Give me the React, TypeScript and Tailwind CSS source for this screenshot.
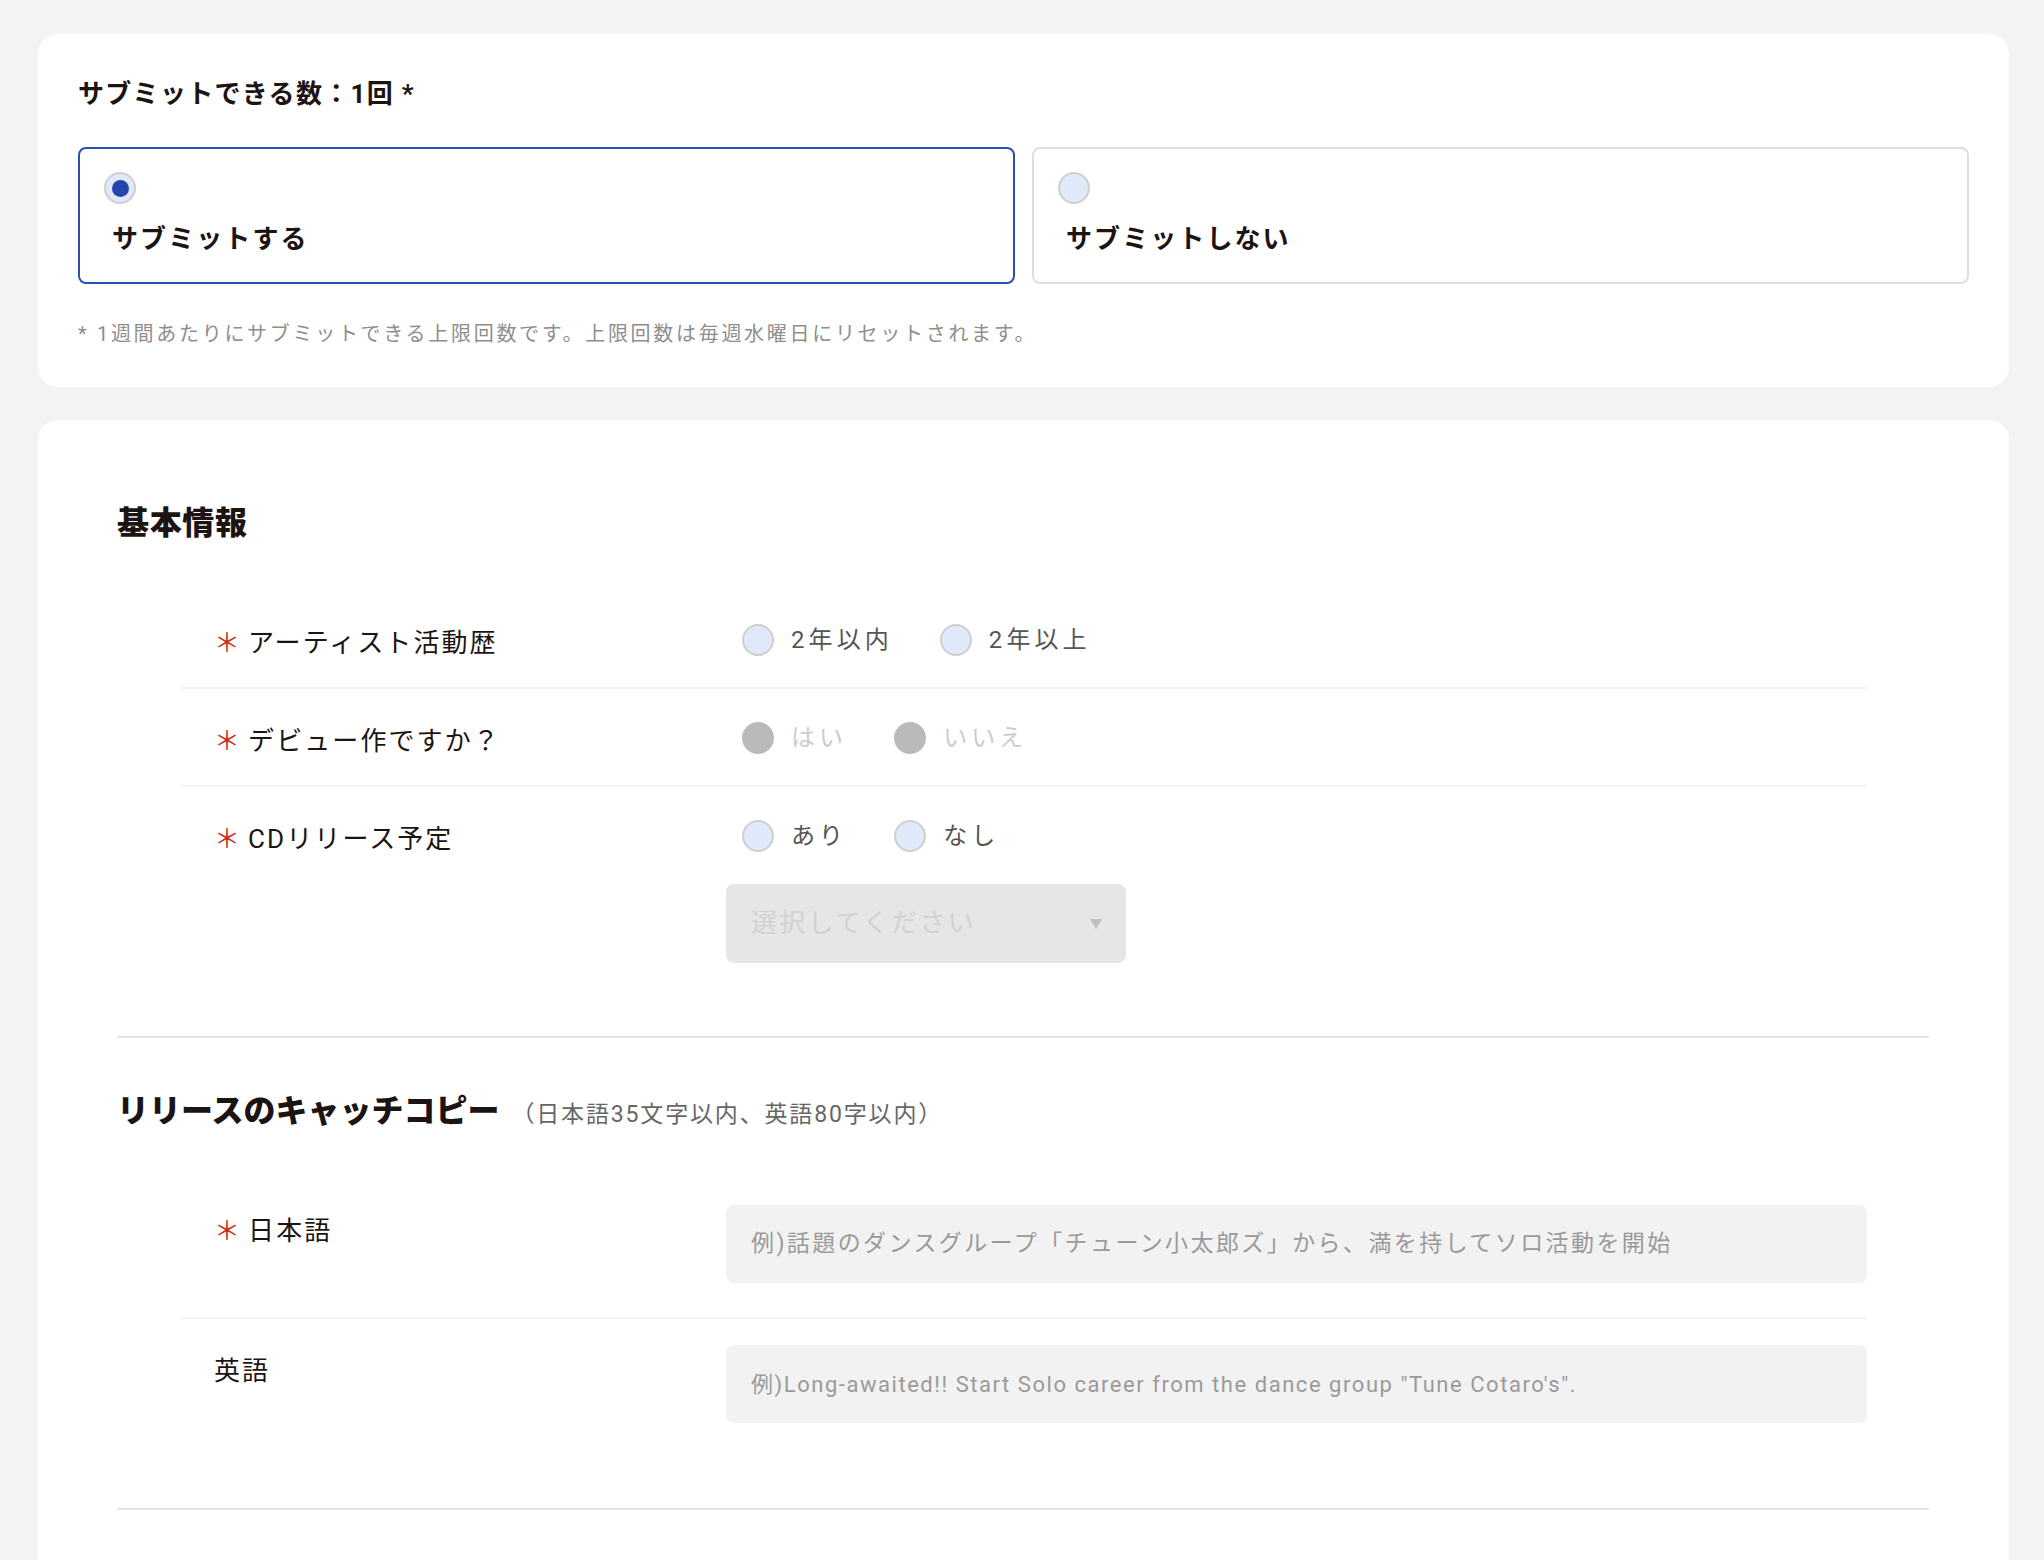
import React from 'react';

type Opt = { label: string };

const Radio = ({ checked, disabled }: { checked?: boolean; disabled?: boolean }) => {
  if (disabled) return <span className="block w-8 h-8 rounded-full bg-[#bababa] shrink-0" />;
  return (
    <span className="flex items-center justify-center w-8 h-8 rounded-full border-2 border-[#cfcfcf] bg-[#dfe9f9] shrink-0">
      {checked && <span className="block w-[17px] h-[17px] rounded-full bg-[#2347aa]" />}
    </span>
  );
};

const Req = () => <span className="text-[#cc2f1e] mr-[6px]">＊</span>;

const RadioGroup = ({ options, disabled }: { options: Opt[]; disabled?: boolean }) => (
  <div className="flex items-center h-[39px] gap-[47px] pl-4">
    {options.map((o) => (
      <label key={o.label} className="flex items-center gap-[17px]">
        <Radio disabled={disabled} />
        <span
          className={`text-[24px] tracking-[0.17em] ${disabled ? 'text-[#cccccc]' : 'text-[#555555]'}`}
        >
          {o.label}
        </span>
      </label>
    ))}
  </div>
);

const ChoiceRow = ({
  label,
  options,
  disabled,
  last,
  children,
}: {
  label: string;
  options: Opt[];
  disabled?: boolean;
  last?: boolean;
  children?: React.ReactNode;
}) => (
  <div className={`pt-[29px] pb-[24px] ${last ? '' : 'border-b-2 border-[#f2f2f2]'}`}>
    <div className="flex items-start">
      <div className="w-[544px] shrink-0 pl-8 pt-[4px] text-[26px] leading-[39px] tracking-[0.08em]">
        <Req />
        {label}
      </div>
      <RadioGroup options={options} disabled={disabled} />
    </div>
    {children}
  </div>
);

const TextRow = ({
  label,
  required,
  placeholder,
  last,
  textClass,
}: {
  label: string;
  required?: boolean;
  placeholder: string;
  last?: boolean;
  textClass: string;
}) => (
  <div className={`flex pt-[26px] pb-[34px] ${last ? '' : 'border-b-2 border-[#f2f2f2]'}`}>
    <div className="w-[544px] shrink-0 pl-8 pt-[7px] text-[26px] leading-[39px] tracking-[0.08em]">
      {required && <Req />}
      {label}
    </div>
    <div className={`flex-1 h-[78px] rounded-lg bg-[#f2f2f2] flex items-center pl-[25px] text-[#9a9a9a] ${textClass}`}>
      {placeholder}
    </div>
  </div>
);

export default function App() {
  return (
    <div className="h-[1560px] overflow-hidden bg-[#f3f3f3] pt-[34px] pl-[38px] pr-[35px] text-[#1c1412] font-[family-name:Roboto,'Noto_Sans_CJK_JP',sans-serif]">
      {/* submit count */}
      <section className="bg-white rounded-[20px] px-10 pt-[41px] pb-[38px]">
        <h2 className="text-[26px] leading-[39px] font-bold tracking-[0.05em]">サブミットできる数：1回 *</h2>
        <div className="grid grid-cols-2 gap-[17px] mt-[33px]">
          <div className="h-[137px] rounded-lg border-2 border-[#2a50b5] pt-[23px] pl-6">
            <Radio checked />
            <p className="mt-[16px] ml-2 text-[26px] leading-[39px] font-bold tracking-[0.08em]">サブミットする</p>
          </div>
          <div className="h-[137px] rounded-lg border-2 border-[#dedede] pt-[23px] pl-6">
            <Radio />
            <p className="mt-[16px] ml-2 text-[26px] leading-[39px] font-bold tracking-[0.08em]">サブミットしない</p>
          </div>
        </div>
        <p className="mt-[35px] text-[20px] leading-[30px] tracking-[0.135em] text-[#8e8e8e]">
          * 1週間あたりにサブミットできる上限回数です。上限回数は毎週水曜日にリセットされます。
        </p>
      </section>

      {/* form */}
      <section className="mt-[33px] bg-white rounded-[20px] pl-[79px] pr-[80px] pb-[200px]">
        <div className="pt-[79px] pb-[49px] border-b-2 border-[#e3e3e3]">
          <h2 className="text-[32px] leading-[48px] font-black tracking-[0.02em]">基本情報</h2>
          <div className="mt-[44px] ml-[65px] mr-[62px]">
            <ChoiceRow label="アーティスト活動歴" options={[{ label: '2年以内' }, { label: '2年以上' }]} />
            <ChoiceRow label="デビュー作ですか？" options={[{ label: 'はい' }, { label: 'いいえ' }]} disabled />
            <ChoiceRow label="CDリリース予定" options={[{ label: 'あり' }, { label: 'なし' }]} last>
              <div className="ml-[544px] mt-[25px] w-[400px] h-[79px] rounded-lg bg-[#e6e6e6] flex items-center justify-between pl-[25px] pr-[24px]">
                <span className="text-[26px] tracking-[0.09em] text-[#d2d2d2]">選択してください</span>
                <svg width="12" height="10" viewBox="0 0 12 10">
                  <path d="M0 0h12L6 10z" fill="#bdbdbd" />
                </svg>
              </div>
            </ChoiceRow>
          </div>
        </div>

        <div className="pt-[49px] pb-[51px] border-b-2 border-[#e3e3e3]">
          <h2 className="flex items-baseline gap-[12px]">
            <span className="text-[32px] leading-[48px] font-black">リリースのキャッチコピー</span>
            <span className="text-[23px] tracking-[0.08em] text-[#666666]">（日本語35文字以内、英語80字以内）</span>
          </h2>
          <div className="mt-[44px] ml-[65px] mr-[62px]">
            <TextRow
              label="日本語"
              required
              textClass="text-[23px] tracking-[0.105em]"
              placeholder="例)話題のダンスグループ「チューン小太郎ズ」から、満を持してソロ活動を開始"
            />
            <TextRow
              label="英語"
              textClass="text-[22px] tracking-[0.07em]"
              placeholder={'例)Long-awaited!! Start Solo career from the dance group "Tune Cotaro\'s".'}
              last
            />
          </div>
        </div>
      </section>
    </div>
  );
}
